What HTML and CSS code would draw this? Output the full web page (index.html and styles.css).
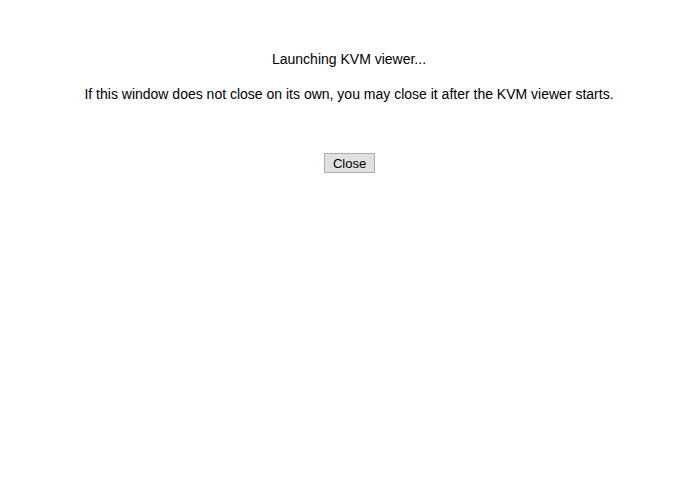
FILE: index.html
```html
<!DOCTYPE html>
<html>
<head>
<meta charset="utf-8">
<link rel="stylesheet" href="styles.css">
</head>
<body>
<div class="page">
  <p class="msg first">Launching KVM viewer...</p>
  <p class="msg second">If this window does not close on its own, you may close it after the KVM viewer starts.</p>
  <div class="actions">
    <button class="btn">Close</button>
  </div>
</div>
</body>
</html>
```
FILE: styles.css
```css
html, body {
  margin: 0;
  padding: 0;
  background: #fff;
}
.page {
  font-family: "Liberation Sans", Arial, sans-serif;
  font-size: 14px;
  color: #000;
  text-align: center;
  padding-top: 51px;
}
.msg {
  margin: 0;
  line-height: 16px;
}
.second {
  margin-top: 19px;
}
.actions {
  margin-top: 51px;
}
.btn {
  font-family: "Liberation Sans", Arial, sans-serif;
  font-size: 13px;
  color: #000;
  width: 51px;
  height: 20px;
  padding: 0;
  background: #e1e1e1;
  border: 1px solid #adadad;
  border-radius: 0;
  margin-left: 1px;
}
```
